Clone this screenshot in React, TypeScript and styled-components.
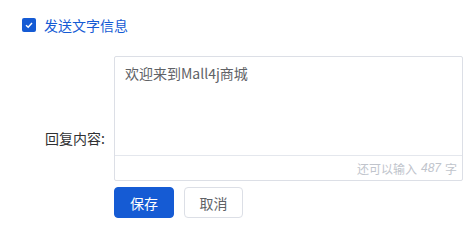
import { FC } from 'react';
import styled, { createGlobalStyle } from 'styled-components';

const GlobalStyle = createGlobalStyle`
  body {
    margin: 0;
    background: #fff;
    font-family: "Noto Sans CJK SC", "Noto Sans", sans-serif;
  }
`;

const Page = styled.div`
  width: 474px;
  height: 228px;
  box-sizing: border-box;
  padding: 18px 0 0 22px;
`;

const CheckRow = styled.label`
  display: flex;
  align-items: center;
  height: 14px;
  cursor: pointer;
`;

const CheckBox = styled.span`
  width: 14px;
  height: 14px;
  border-radius: 2px;
  background: #155bd4;
  display: flex;
  align-items: center;
  justify-content: center;
`;

const CheckText = styled.span`
  margin-left: 8px;
  font-size: 14px;
  line-height: 20px;
  color: #155bd4;
`;

const FormRow = styled.div`
  display: flex;
  align-items: flex-start;
  margin: 24px 0 0 -22px;
`;

const Label = styled.div`
  width: 114px;
  box-sizing: border-box;
  padding-right: 9px;
  margin-top: 72px;
  text-align: right;
  font-size: 14px;
  line-height: 20px;
  color: #303133;
`;

const Field = styled.div`
  display: flex;
  flex-direction: column;
`;

const TextBox = styled.div`
  width: 349px;
  box-sizing: border-box;
  border: 1px solid #dcdfe6;
  border-radius: 2px;
`;

const TextArea = styled.div`
  height: 99px;
  padding: 5px 10px;
  box-sizing: border-box;
  font-size: 14px;
  line-height: 22px;
  color: #606266;
  border-bottom: 1px solid #e4e7ed;
`;

const Counter = styled.div`
  height: 24px;
  padding-right: 5px;
  display: flex;
  align-items: center;
  justify-content: flex-end;
  font-size: 12px;
  color: #c0c4cc;

  em {
    margin: 0 4px;
    font-family: "Liberation Sans", Arial, sans-serif;
  }
`;

const Buttons = styled.div`
  display: flex;
  gap: 10px;
  margin-top: 6px;
`;

const Button = styled.button<{ $primary?: boolean }>`
  width: ${p => (p.$primary ? 60 : 59)}px;
  height: 31px;
  padding: 0;
  border-radius: 4px;
  font-family: inherit;
  font-size: 14px;
  cursor: pointer;
  border: 1px solid ${p => (p.$primary ? '#155bd4' : '#dcdfe6')};
  background: ${p => (p.$primary ? '#155bd4' : '#fff')};
  color: ${p => (p.$primary ? '#fff' : '#606266')};
`;

const App: FC = () => (
  <>
    <GlobalStyle />
    <Page>
      <CheckRow>
        <CheckBox>
          <svg width="10" height="10" viewBox="0 0 10 10">
            <path d="M2 5.2 L4.2 7.2 L8 3" fill="none" stroke="#fff" strokeWidth="1.5" />
          </svg>
        </CheckBox>
        <CheckText>发送文字信息</CheckText>
      </CheckRow>
      <FormRow>
        <Label>回复内容:</Label>
        <Field>
          <TextBox>
            <TextArea>欢迎来到Mall4j商城</TextArea>
            <Counter>
              还可以输入<em>487</em>字
            </Counter>
          </TextBox>
          <Buttons>
            <Button $primary>保存</Button>
            <Button>取消</Button>
          </Buttons>
        </Field>
      </FormRow>
    </Page>
  </>
);

export default App;
